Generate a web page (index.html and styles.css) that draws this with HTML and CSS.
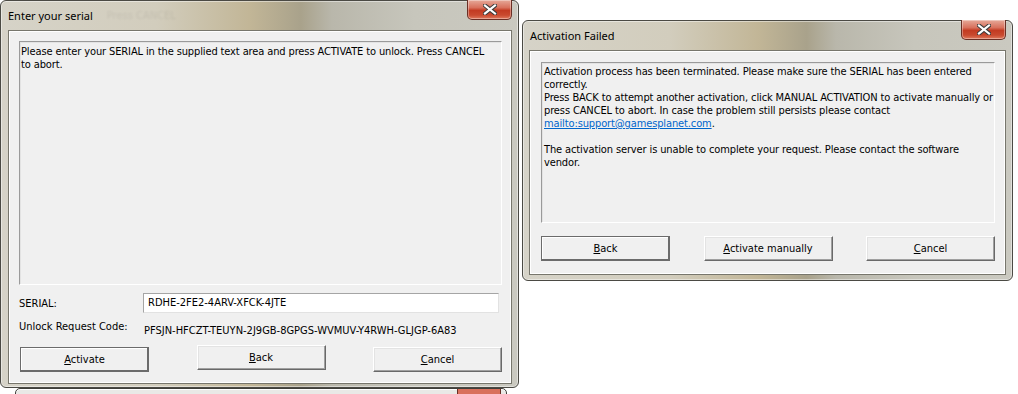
FILE: index.html
```html
<html><head>
	<title>Activation</title>
	<link rel="stylesheet" href="styles.css">
</head>
<body>
	<div id="desktop">

		<div class="backWindow">
			<div class="backClose"></div>
		</div>

		<div class="window" id="serialWindow">
			<div class="titlebar">
				<span class="title">Enter your serial</span>
				<span class="ghost">Press CANCEL</span>
				<div class="close">
					<svg width="14" height="11" viewBox="0 0 14 11">
						<path d="M2 1.5 L12 9.5 M12 1.5 L2 9.5" stroke="#3b3b3b" stroke-width="4.2" stroke-linecap="square"/>
						<path d="M2 1.5 L12 9.5 M12 1.5 L2 9.5" stroke="#fff" stroke-width="2.2" stroke-linecap="square"/>
					</svg>
				</div>
			</div>
			<div class="client">
				<div class="panel">
					Please enter your SERIAL in the supplied text area and press ACTIVATE to unlock. Press CANCEL<br>
					to abort.
				</div>
				<div class="fields">
					<span class="label">SERIAL:</span>
					<div class="input">RDHE-2FE2-4ARV-XFCK-4JTE</div>
					<span class="label">Unlock Request Code:</span>
					<span class="code">PFSJN-HFCZT-TEUYN-2J9GB-8GPGS-WVMUV-Y4RWH-GLJGP-6A83</span>
				</div>
				<div class="buttons">
					<button class="default"><u>A</u>ctivate</button>
					<button class="raised"><u>B</u>ack</button>
					<button><u>C</u>ancel</button>
				</div>
			</div>
		</div>

		<div class="window" id="failedWindow">
			<div class="titlebar">
				<span class="title">Activation Failed</span>
				<div class="close">
					<svg width="14" height="11" viewBox="0 0 14 11">
						<path d="M2 1.5 L12 9.5 M12 1.5 L2 9.5" stroke="#3b3b3b" stroke-width="4.2" stroke-linecap="square"/>
						<path d="M2 1.5 L12 9.5 M12 1.5 L2 9.5" stroke="#fff" stroke-width="2.2" stroke-linecap="square"/>
					</svg>
				</div>
			</div>
			<div class="client">
				<div class="panel">
					Activation process has been terminated. Please make sure the SERIAL has been entered<br>
					correctly.<br>
					Press BACK to attempt another activation, click MANUAL ACTIVATION to activate manually or<br>
					press CANCEL to abort. In case the problem still persists please contact<br>
					<a href="#">mailto:support@gamesplanet.com</a>.<br>
					<br>
					The activation server is unable to complete your request. Please contact the software<br>
					vendor.
				</div>
				<div class="buttons">
					<button class="default"><u>B</u>ack</button>
					<button><u>A</u>ctivate manually</button>
					<button><u>C</u>ancel</button>
				</div>
			</div>
		</div>

	</div>
</body></html>
```

FILE: styles.css
```css
		html, body {
			margin: 0;
			background: #fff;
		}
		#desktop {
			position: relative;
			width: 1018px;
			height: 394px;
			overflow: hidden;
			font-family: "DejaVu Sans Condensed", "DejaVu Sans", "Liberation Sans", sans-serif;
			font-stretch: condensed;
			font-size: 11px;
			color: #000;
		}

		/* windows sit on a free desktop */
		.window {
			position: absolute;
			box-sizing: border-box;
			display: flex;
			flex-direction: column;
			border: 1px solid #4b4a44;
			border-radius: 6px;
			box-shadow: inset 0 0 0 1px rgba(255,255,255,.45);
			background: linear-gradient(90deg, #d6d3c8 0%, #d2cdbd 30%, #c2b697 48%, #a9a28b 58%, #b9b7ab 64%, #c7c6bc 80%, #cac9c0 100%);
		}
		#serialWindow {
			left: 0;
			top: 0;
			width: 519px;
			height: 388px;
		}
		#failedWindow {
			left: 522px;
			top: 20px;
			width: 491px;
			height: 261px;
		}

		.titlebar {
			height: 29px;
			display: flex;
			align-items: flex-start;
			flex-shrink: 0;
		}
		.titlebar .title {
			font-family: "Noto Sans", "Open Sans", sans-serif;
			font-stretch: normal;
			font-size: 11px;
			line-height: 29px;
			padding-left: 7px;
			color: #000;
		}
		.titlebar .ghost {
			font-size: 11px;
			line-height: 29px;
			margin-left: 14px;
			color: #000;
			opacity: .07;
			filter: blur(1.2px);
		}
		.titlebar .close {
			margin-left: auto;
			margin-right: 6px;
			margin-top: -1px;
			width: 45px;
			height: 20px;
			box-sizing: border-box;
			border: 1px solid #6a2f25;
			border-top: none;
			border-radius: 0 0 5px 5px;
			background: linear-gradient(180deg, #e6a999 0%, #d8715d 40%, #c33b22 55%, #c94a2f 80%, #e07a5e 100%);
			box-shadow: inset 0 0 0 1px rgba(255,255,255,.35);
			display: flex;
			align-items: center;
			justify-content: center;
		}

		.client {
			flex: 1;
			display: flex;
			flex-direction: column;
			background: #f0f0f0;
			border: 1px solid #77766c;
			box-shadow: inset 0 0 0 1px #fff;
		}
		#serialWindow .client {
			margin: 0 6px 3px 7px;
			padding: 10px 9px 11px 10px;
		}
		#failedWindow .client {
			margin: 0 6px 5px 6px;
			padding: 11px 10px 13px 11px;
		}

		.panel {
			box-sizing: border-box;
			border: 1px solid;
			border-color: #9a9a9a #fff #fff #9a9a9a;
			box-shadow: inset 1px 1px 0 #e3e3e3;
			line-height: 13px;
			letter-spacing: -0.12px;
			white-space: nowrap;
		}
		#serialWindow .panel {
			height: 244px;
			padding: 3px 1px;
		}
		#failedWindow .panel {
			height: 161px;
			padding: 2px 2px;
		}
		.panel a {
			color: #0066cc;
		}

		.fields {
			display: grid;
			grid-template-columns: 124px 1fr;
			grid-template-rows: 20px 27px;
			margin-top: 8px;
			align-items: center;
		}
		.fields .input {
			box-sizing: border-box;
			height: 20px;
			margin-right: 3px;
			background: #fff;
			border: 1px solid;
			border-color: #a5a5a5 #e2e2e2 #e2e2e2 #a5a5a5;
			padding: 0 4px;
			line-height: 18px;
		}
		.fields .label {
			line-height: 13px;
		}
		.fields .code {
			padding: 8px 0 0 1px;
			line-height: 13px;
		}

		.buttons {
			display: flex;
			justify-content: space-between;
			margin-top: auto;
		}
		#serialWindow .buttons {
			padding-left: 1px;
		}
		button {
			width: 129px;
			height: 25px;
			box-sizing: border-box;
			font: inherit;
			color: #000;
			background: #f0f0f0;
			border: 1px solid;
			border-color: #fff #696969 #696969 #fff;
			box-shadow: inset -1px -1px 0 #a0a0a0, inset 1px 1px 0 #e3e3e3;
			padding: 0;
		}
		button.default {
			border-color: #6b6b6b;
			box-shadow: inset -1px -1px 0 #6b6b6b, inset 1px 1px 0 #fff;
		}
		button.raised {
			position: relative;
			top: -2px;
		}
		button u {
			text-decoration: underline;
		}

		/* window behind, barely visible at the bottom */
		.backWindow {
			position: absolute;
			left: 15px;
			top: 388px;
			width: 492px;
			height: 20px;
			box-sizing: border-box;
			border: 1px solid #3f3f3a;
			border-radius: 5px 5px 0 0;
			background: #e9e9e6;
			box-shadow: inset 0 1px 0 #fff;
		}
		.backWindow .backClose {
			position: absolute;
			left: 441px;
			top: 0;
			width: 42px;
			height: 20px;
			background: #d9705c;
			border-left: 1px solid #6a2f25;
			border-right: 1px solid #6a2f25;
		}
```
